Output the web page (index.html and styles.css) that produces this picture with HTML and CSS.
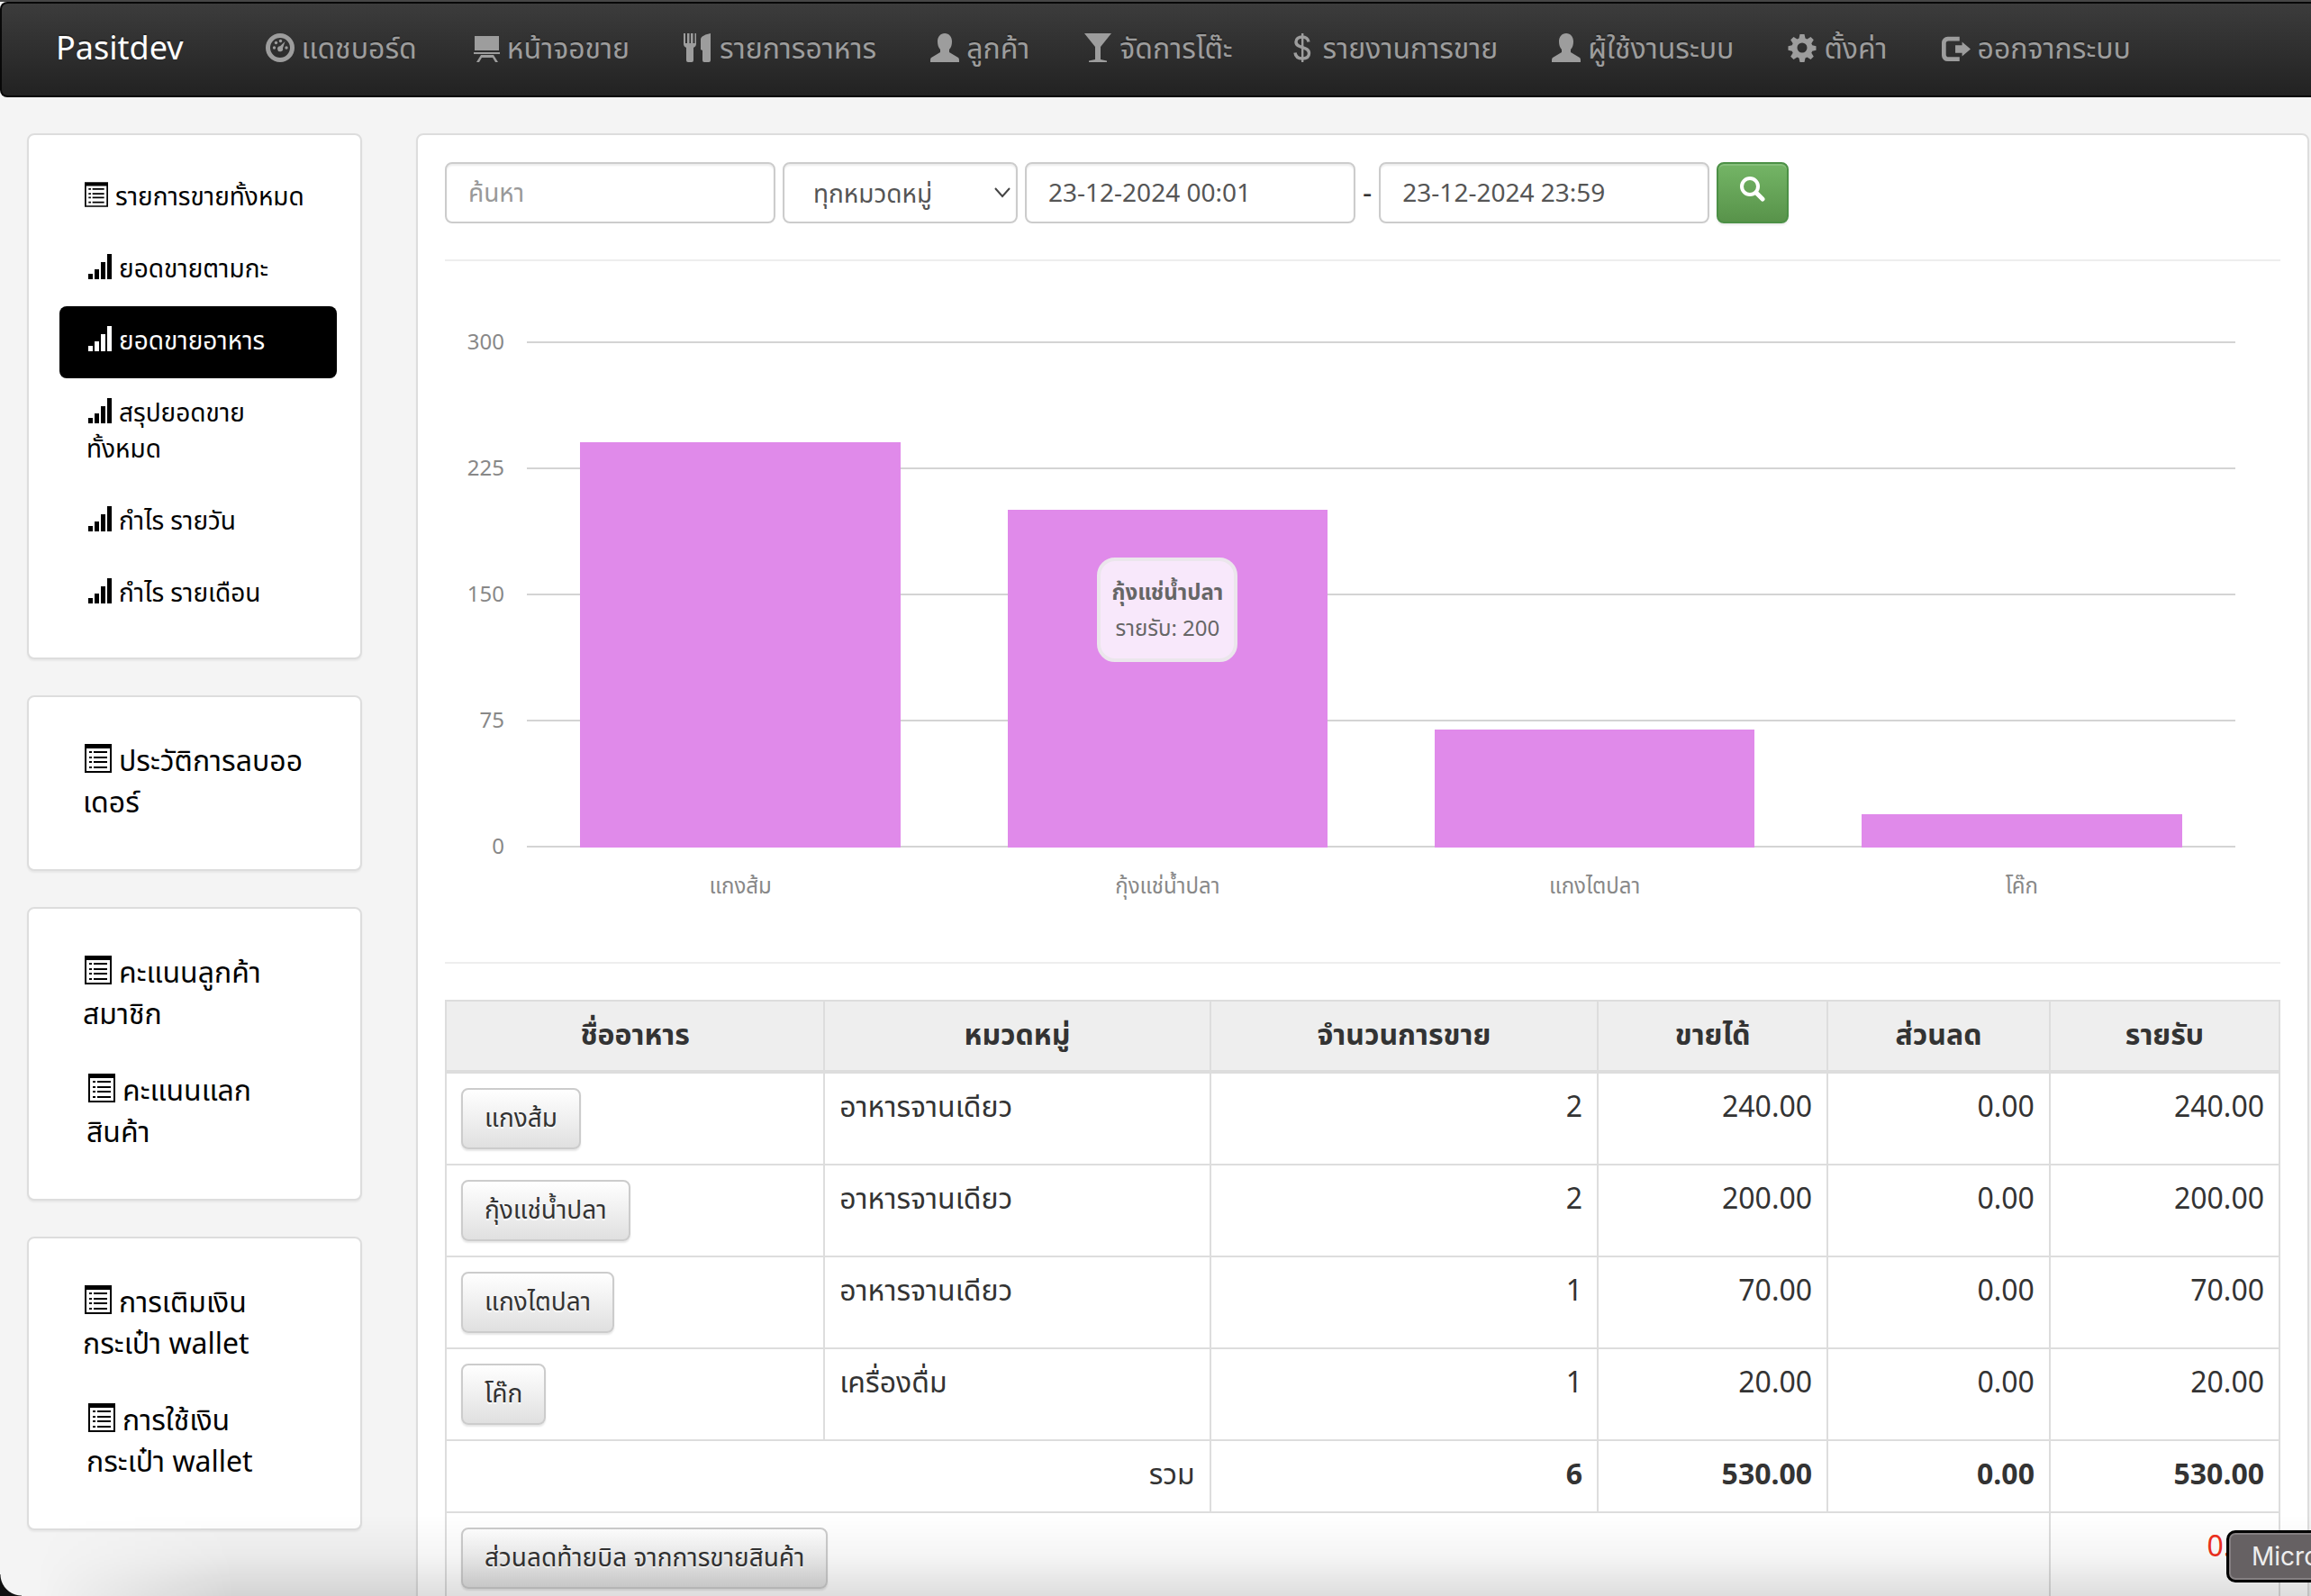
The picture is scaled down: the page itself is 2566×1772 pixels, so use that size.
FILE: index.html
```html
<!DOCTYPE html>
<html lang="th">
<head>
<meta charset="utf-8">
<meta name="viewport" content="width=device-width, initial-scale=1">
<title>Pasitdev</title>
<link rel="stylesheet" href="styles.css">
</head>
<body>
<svg class="sprite" aria-hidden="true">
  <symbol id="i-dashboard" viewBox="0 0 32 32"><path fill-rule="evenodd" d="M16 0a16 16 0 1 1 0 32a16 16 0 1 1 0-32zM16 5a11 11 0 1 0 0 22a11 11 0 1 0 0-22z"/><circle cx="9.500" cy="16" r="1.700"/><circle cx="11.500" cy="10.500" r="1.700"/><circle cx="16.500" cy="8.500" r="1.700"/><circle cx="23" cy="16" r="1.700"/><path d="M21.500 9l-2.500 7.500a3 3 0 1 1-3-2.200z"/></symbol>
  <symbol id="i-stage" viewBox="0 0 32 32"><path d="M4 3h27v16H4zM3 21h29v2H3zM11 24h14l5 8h-3l-3-5H12l-3 5H6z"/></symbol>
  <symbol id="i-cutlery" viewBox="0 0 32 32"><path d="M0 0h2v11h2V0h2.500v11h1.500V0h2.500v11h2V0H14v12c0 2-1.500 3-3 4v14a2 2 0 0 1-2 2H5a2 2 0 0 1-2-2V16c-1.500-1-3-2-3-4zM30 0v30a2 2 0 0 1-2 2h-5a2 2 0 0 1-2-2V19l-2-1V7c0-4 6-6 11-7z"/></symbol>
  <symbol id="i-user" viewBox="0 0 32 32"><path d="M16 0c5 0 8 4 8 9 0 4-1 7-3 9v3l10 6c1 1 1 2 1 5H0c0-3 0-4 1-5l10-6v-3c-2-2-3-5-3-9 0-5 3-9 8-9z"/></symbol>
  <symbol id="i-glass" viewBox="0 0 32 32"><path d="M1 0h30L19 15v14l7 1.500V32H6v-1.500L13 29V15z"/></symbol>
  <symbol id="i-usd" viewBox="0 0 32 32"><path fill="none" stroke="currentColor" stroke-width="3.400" d="M24 9.500C23.500 6 20.500 4 17 4c-4 0-7 2-7 5.500 0 8 14.500 4 14.500 12.500 0 4-3 6-7.500 6s-7.500-2.500-8-6.500"/><path d="M16 0h2.400v32H16z"/></symbol>
  <symbol id="i-cog" viewBox="0 0 32 32"><path fill-rule="evenodd" d="M13.500 1h5l1 4.500 2 1 4-2.500 3.300 3.300-2.500 4 1 2 4.200 1v4.400l-4.200 1-1 2 2.500 4-3.300 3.300-4-2.500-2 1-1 4.500h-5l-1-4.500-2-1-4 2.500-3.300-3.300 2.500-4-1-2-4.200-1v-4.400l4.200-1 1-2-2.500-4L6.500 4l4 2.500 2-1zM16 10.500a5.500 5.500 0 1 0 0 11a5.500 5.500 0 1 0 0-11z"/></symbol>
  <symbol id="i-logout" viewBox="0 0 34 32"><path d="M21 3v5H8a3 3 0 0 0-3 3v13a3 3 0 0 0 3 3h13v5H7a7 7 0 0 1-7-7V10a7 7 0 0 1 7-7z"/><path d="M16 13h8V9l10 8.500L24 26v-4h-8z"/></symbol>
  <symbol id="i-list" viewBox="0 0 30 32"><path fill-rule="evenodd" d="M0 0h30v32H0zM2 5v25h26V5z"/><path d="M5 8h3v2H5zM10 8h15v2H10zM5 14h3v2H5zM10 14h15v2H10zM5 19h3v2H5zM10 19h15v2H10zM5 25h3v2H5zM10 25h15v2H10z"/></symbol>
  <symbol id="i-signal" viewBox="0 0 26 28"><path d="M0 22h5v6H0zM7 17h5v11H7zM14 9h5v19h-5zM21 0h5v28h-5z"/></symbol>
  <symbol id="i-search" viewBox="0 0 28 28"><circle cx="11" cy="11" r="9" fill="none" stroke="currentColor" stroke-width="4"/><path fill="none" stroke="currentColor" stroke-width="5" stroke-linecap="round" d="M18.500 18.500l6.500 6.500"/></symbol>
</svg>

<div class="app">
  <nav class="navbar">
    <a class="brand" href="#">Pasitdev</a>
    <a class="nav-link" href="#"><svg class="icon"><use href="#i-dashboard"/></svg>แดชบอร์ด</a>
    <a class="nav-link" href="#"><svg class="icon"><use href="#i-stage"/></svg>หน้าจอขาย</a>
    <a class="nav-link" href="#"><svg class="icon"><use href="#i-cutlery"/></svg>รายการอาหาร</a>
    <a class="nav-link" href="#"><svg class="icon"><use href="#i-user"/></svg>ลูกค้า</a>
    <a class="nav-link" href="#"><svg class="icon"><use href="#i-glass"/></svg>จัดการโต๊ะ</a>
    <a class="nav-link" href="#"><svg class="icon"><use href="#i-usd"/></svg>รายงานการขาย</a>
    <a class="nav-link" href="#"><svg class="icon"><use href="#i-user"/></svg>ผู้ใช้งานระบบ</a>
    <a class="nav-link" href="#"><svg class="icon"><use href="#i-cog"/></svg>ตั้งค่า</a>
    <a class="nav-link" href="#"><svg class="icon"><use href="#i-logout"/></svg>ออกจากระบบ</a>
  </nav>

  <div class="layout">
    <aside class="sidebar">
      <section class="panel menu menu-small">
        <a class="menu-item" href="#"><svg class="icon"><use href="#i-list"/></svg>รายการขายทั้งหมด</a>
        <a class="menu-item" href="#"><svg class="icon"><use href="#i-signal"/></svg>ยอดขายตามกะ</a>
        <a class="menu-item active" href="#"><svg class="icon"><use href="#i-signal"/></svg>ยอดขายอาหาร</a>
        <a class="menu-item" href="#"><svg class="icon"><use href="#i-signal"/></svg>สรุปยอดขาย<br>ทั้งหมด</a>
        <a class="menu-item" href="#"><svg class="icon"><use href="#i-signal"/></svg>กำไร รายวัน</a>
        <a class="menu-item" href="#"><svg class="icon"><use href="#i-signal"/></svg>กำไร รายเดือน</a>
      </section>
      <section class="panel menu">
        <a class="menu-item" href="#"><svg class="icon"><use href="#i-list"/></svg>ประวัติการลบออ<br>เดอร์</a>
      </section>
      <section class="panel menu">
        <a class="menu-item" href="#"><svg class="icon"><use href="#i-list"/></svg>คะแนนลูกค้า<br>สมาชิก</a>
        <a class="menu-item" href="#"><svg class="icon"><use href="#i-list"/></svg>คะแนนแลก<br>สินค้า</a>
      </section>
      <section class="panel menu">
        <a class="menu-item" href="#"><svg class="icon"><use href="#i-list"/></svg>การเติมเงิน<br>กระเป๋า wallet</a>
        <a class="menu-item" href="#"><svg class="icon"><use href="#i-list"/></svg>การใช้เงิน<br>กระเป๋า wallet</a>
      </section>
    </aside>

    <main class="panel content">
      <form class="filters">
        <input class="field" type="text" placeholder="ค้นหา" aria-label="ค้นหา">
        <div class="select-wrap">
          <select class="field" aria-label="หมวดหมู่"><option>ทุกหมวดหมู่</option></select>
          <svg class="chevron" viewBox="0 0 18 12"><path d="M1 1l8 9 8-9"/></svg>
        </div>
        <input class="field" type="text" value="23-12-2024 00:01" aria-label="จากวันที่">
        <span>-</span>
        <input class="field" type="text" value="23-12-2024 23:59" aria-label="ถึงวันที่">
        <button class="btn-search" type="button" aria-label="ค้นหา"><svg class="icon"><use href="#i-search"/></svg></button>
      </form>
      <hr>

      <div class="chart">
        <div class="axis"><span>300</span><span>225</span><span>150</span><span>75</span><span>0</span></div>
        <div class="plot">
          <div class="lines"><i></i><i></i><i></i><i></i><i></i></div>
          <div class="bars">
            <div class="bar" style="height:80%"></div>
            <div class="bar" style="height:66.667%">
              <div class="tip"><strong>กุ้งแช่น้ำปลา</strong><span>รายรับ: 200</span></div>
            </div>
            <div class="bar" style="height:23.333%"></div>
            <div class="bar" style="height:6.667%"></div>
          </div>
        </div>
        <div class="categories"><span>แกงส้ม</span><span>กุ้งแช่น้ำปลา</span><span>แกงไตปลา</span><span>โค๊ก</span></div>
      </div>
      <hr>

      <table class="sales">
        <colgroup><col class="c-name"><col class="c-cat"><col class="c-qty"><col class="c-sum"><col class="c-disc"><col class="c-sum"></colgroup>
        <thead>
          <tr><th>ชื่ออาหาร</th><th>หมวดหมู่</th><th>จำนวนการขาย</th><th>ขายได้</th><th>ส่วนลด</th><th>รายรับ</th></tr>
        </thead>
        <tbody>
          <tr><td class="action"><button class="btn" type="button">แกงส้ม</button></td><td>อาหารจานเดียว</td><td class="num">2</td><td class="num">240.00</td><td class="num">0.00</td><td class="num">240.00</td></tr>
          <tr><td class="action"><button class="btn" type="button">กุ้งแช่น้ำปลา</button></td><td>อาหารจานเดียว</td><td class="num">2</td><td class="num">200.00</td><td class="num">0.00</td><td class="num">200.00</td></tr>
          <tr><td class="action"><button class="btn" type="button">แกงไตปลา</button></td><td>อาหารจานเดียว</td><td class="num">1</td><td class="num">70.00</td><td class="num">0.00</td><td class="num">70.00</td></tr>
          <tr><td class="action"><button class="btn" type="button">โค๊ก</button></td><td>เครื่องดื่ม</td><td class="num">1</td><td class="num">20.00</td><td class="num">0.00</td><td class="num">20.00</td></tr>
          <tr class="total"><td class="num label" colspan="2">รวม</td><td class="num">6</td><td class="num">530.00</td><td class="num">0.00</td><td class="num">530.00</td></tr>
          <tr><td class="action" colspan="5"><button class="btn" type="button">ส่วนลดท้ายบิล จากการขายสินค้า</button></td><td class="num negative">0.00</td></tr>
        </tbody>
      </table>
    </main>
  </div>
  <div class="dock-shade"></div>
  <div class="dock-corner"></div>
  <div class="dock-label">Micro</div>
</div>
</body>
</html>
```

FILE: styles.css
```css
* { box-sizing: border-box; }

body {
  margin: 0;
  background: #f4f4f4;
  color: #333;
  font: 32px/46px "Noto Sans", "Noto Sans Thai", sans-serif;
}

a { text-decoration: none; }

.sprite { position: absolute; width: 0; height: 0; }

.icon { fill: currentColor; color: inherit; }

.app {
  position: relative;
  height: 100vh;
  overflow: hidden;
  border-top: 2px solid #464646;
}

/* Top navigation */
.navbar {
  display: flex;
  align-items: center;
  height: 106px;
  padding: 0 0 5px 60px;
  border: 2px solid #080808;
  border-right: 0;
  border-radius: 8px 0 0 8px;
  background: linear-gradient(#3c3c3c, #222);
  white-space: nowrap;
  line-height: 40px;
  text-shadow: 0 -2px 0 rgba(0, 0, 0, .25);
}

.brand { margin-right: 61px; color: #fff; font-size: 36px; }

.nav-link {
  display: flex;
  align-items: center;
  gap: 8px;
  padding: 0 30px;
  color: #9d9d9d;
}

.navbar .icon { flex: none; width: 32px; height: 32px; }

/* Page columns */
.layout {
  display: grid;
  grid-template-columns: 372px minmax(0, 1fr);
  gap: 60px;
  align-items: start;
  padding: 40px 2px 0 30px;
}

.sidebar { display: grid; gap: 40px; }

.panel {
  padding: 30px;
  border: 2px solid #ddd;
  border-radius: 8px;
  background: #fff;
  box-shadow: 0 2px 2px rgba(0, 0, 0, .05);
}

.menu-item {
  display: block;
  margin: 0 -4px 0 4px;
  padding: 17px 0 22px 30px;
  border-radius: 8px;
  color: #000;
  white-space: nowrap;
}

.menu-item:first-child { margin-left: 0; }

.menu-item .icon {
  width: 30px;
  height: 32px;
  margin: 0 8px 0 2px;
  vertical-align: -2px;
}

.menu-small { font-size: 28px; line-height: 40px; }

.menu-small .menu-item { padding-bottom: 23px; }

.menu-small .icon { width: 26px; height: 28px; }

.menu-item.active { background: #000; color: #fff; }

/* Filters */
.filters {
  display: flex;
  align-items: center;
  gap: 8px;
}

.field {
  width: 367px;
  height: 68px;
  padding: 0 24px 2px;
  border: 2px solid #ccc;
  border-radius: 8px;
  background: #fff;
  box-shadow: inset 0 2px 2px rgba(0, 0, 0, .075);
  color: #555;
  font: inherit;
  font-size: 28px;
  line-height: 40px;
}

.field::placeholder { color: #999; opacity: 1; }

.select-wrap { position: relative; }

select.field {
  display: block;
  width: 261px;
  padding: 0 24px 0 32px;
  appearance: none;
}

.chevron {
  position: absolute;
  top: 28px;
  right: 8px;
  width: 18px;
  height: 12px;
  fill: none;
  stroke: #444;
  stroke-width: 2;
  pointer-events: none;
}

.btn-search {
  display: grid;
  place-items: center;
  width: 80px;
  height: 68px;
  padding: 0 0 8px;
  border: 2px solid #4c9046;
  border-radius: 8px;
  background: linear-gradient(#74b566, #58934a);
  box-shadow: inset 0 2px 0 rgba(255, 255, 255, .15), 0 2px 2px rgba(0, 0, 0, .075);
  color: #fff;
}

.btn-search .icon { width: 28px; height: 28px; }

hr { height: 2px; margin: 40px 0; border: 0; background: #eee; }

/* Bar chart */
.chart {
  display: grid;
  grid-template-columns: 66px minmax(0, 1fr);
  column-gap: 25px;
  padding: 35px 50px 31px 0;
  color: #888;
  font-size: 24px;
  line-height: 28px;
}

.axis {
  display: flex;
  flex-direction: column;
  justify-content: space-between;
  height: 588px;
  text-align: right;
}

.plot { display: grid; margin: 14px 0; height: 562px; }

.lines, .bars { grid-area: 1 / 1; }

.lines { display: flex; flex-direction: column; justify-content: space-between; }

.lines i { height: 2px; background: #d4d4d4; }

.bars {
  display: grid;
  grid-template-columns: repeat(4, 1fr);
  align-items: end;
  justify-items: center;
}

.bar { position: relative; width: 75%; background: #e08aea; }

.tip {
  position: absolute;
  top: 53px;
  left: 50%;
  display: grid;
  width: 156px;
  padding: 14px 0;
  border: 4px solid #ebe6ec;
  border-radius: 20px;
  background: #f8e8fb;
  color: #666;
  line-height: 40px;
  text-align: center;
  white-space: nowrap;
  transform: translateX(-50%);
}

.categories {
  grid-column: 2;
  display: grid;
  grid-template-columns: repeat(4, 1fr);
  padding-top: 14px;
  text-align: center;
}

/* Sales table */
.sales {
  width: 100%;
  border-collapse: collapse;
  table-layout: fixed;
}

.c-name { width: 20.6%; }
.c-cat { width: 21%; }
.c-qty { width: 21.1%; }
.c-sum { width: 12.5%; }
.c-disc { width: 12.1%; }

.sales th, .sales td {
  padding: 13px 16px 19px;
  border: 2px solid #ddd;
  text-align: left;
  vertical-align: top;
}

.sales th {
  padding-bottom: 17px;
  border-bottom-width: 4px;
  background: #eee;
  text-align: center;
}

.sales .action { padding: 16px; }

.sales .num { text-align: right; }

.total { font-weight: 700; }

.total .label { font-weight: 400; }

.sales .negative { color: #f03020; }

.btn {
  display: block;
  height: 68px;
  padding: 0 24px 4px;
  border: 2px solid #ccc;
  border-radius: 8px;
  background: linear-gradient(#fff, #e0e0e0);
  box-shadow: 0 2px 2px rgba(0, 0, 0, .1);
  color: #333;
  font: inherit;
  font-size: 28px;
  line-height: 40px;
  text-shadow: 0 2px 0 #fff;
}

/* Desktop dock over the lower edge of the window */
.dock-shade {
  position: absolute;
  inset: auto 0 0;
  height: 90px;
  background: linear-gradient(transparent, rgba(0, 0, 0, .04) 50%, rgba(0, 0, 0, .13));
  mask-image: linear-gradient(90deg, transparent 40px, #000 260px);
}

.dock-corner {
  position: absolute;
  bottom: 0;
  left: 0;
  width: 24px;
  height: 24px;
  background: radial-gradient(circle at 100% 0, transparent 23px, #111 24px);
}

.dock-label {
  position: absolute;
  right: -30px;
  bottom: 15px;
  width: 124px;
  padding: 6px 0 6px 25px;
  border: 3px solid #000;
  border-radius: 10px;
  background: #666163;
  box-shadow: inset 0 0 0 2px #858082;
  color: #eee;
  font: 28px/40px Inter, sans-serif;
}
```
